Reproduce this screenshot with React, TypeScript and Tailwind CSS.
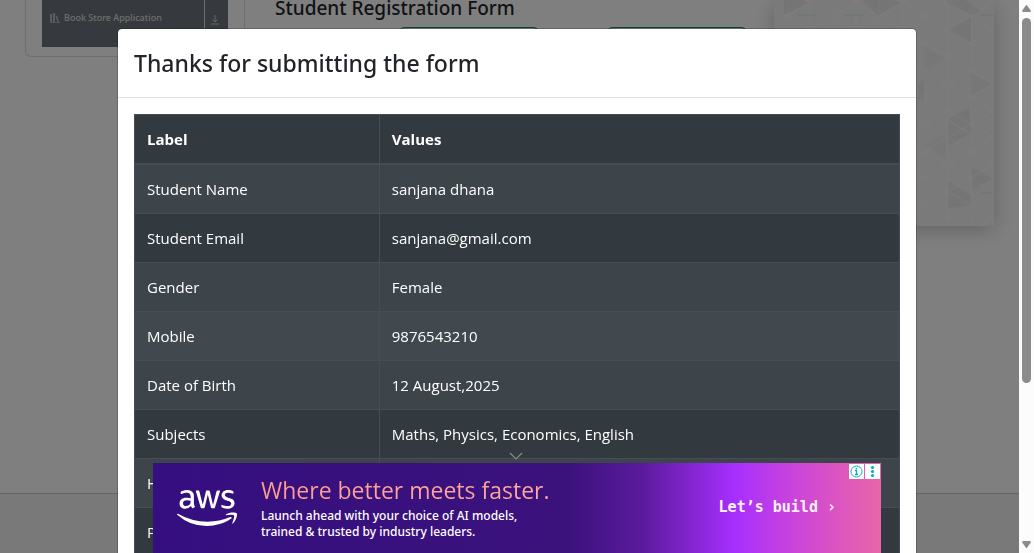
import React from 'react';
import { FaAws } from 'react-icons/fa';

const rows: [string, string][] = [
  ['Student Name', 'sanjana dhana'],
  ['Student Email', 'sanjana@gmail.com'],
  ['Gender', 'Female'],
  ['Mobile', '9876543210'],
  ['Date of Birth', '12 August,2025'],
  ['Subjects', 'Maths, Physics, Economics, English'],
  ['Hobbies', ''],
  ['Picture', ''],
];

function rowShade(index: number) {
  if (index === 3) return 'bg-[#42494e]';
  return index % 2 === 0 ? 'bg-[#3d444a]' : 'bg-[#32393f]';
}

function TriangleArt() {
  return (
    <svg className="block h-[226px] w-full" viewBox="0 0 220 226" preserveAspectRatio="none" aria-hidden="true">
      <defs>
        <pattern id="tri" width="46" height="27" patternUnits="userSpaceOnUse" x="13" y="16">
          <path
            d="M0 0V27M23 0V27M0 0L23 13.5L46 0M0 27L23 13.5L46 27"
            fill="none"
            stroke="#ffffff"
            strokeOpacity="0.45"
            strokeWidth="1.2"
          />
        </pattern>
      </defs>
      <rect width="220" height="226" fill="#f5f5f5" />
      <g fill="#eaeaea">
        <path d="M10 -12L34 3L10 15Z" />
        <path d="M80 -8L104 16L127 3L104 -8Z" />
        <path d="M172 -10L196 3L207 12L196 15L172 3Z" />
        <path d="M174 30L197 17V43Z" />
        <path d="M144 85L150 78V100H144Z" />
        <path d="M174 119L195 107L197 133L174 119Z" />
        <path d="M174 121L195 134L174 146Z" />
        <path d="M197 167L219 178L199 190Z" />
        <path d="M174 181L197 195V206L174 208Z" />
        <path d="M197 72L218 85L197 96Z" fillOpacity="0.6" />
        <path d="M150 46L172 60L150 72Z" fillOpacity="0.6" />
        <path d="M150 145L172 134V158Z" fillOpacity="0.5" />
      </g>
      <rect width="220" height="226" fill="url(#tri)" />
      <g stroke="#d0eaea" strokeWidth="1">
        <path d="M24 15H42M70 15H90M206 15H220M206 193H219" />
      </g>
    </svg>
  );
}

function BackgroundPage() {
  return (
    <div className="flex min-h-screen flex-col bg-white">
      <div className="flex items-start pr-10 pl-[25px]">
        <aside className="w-[220px] shrink-0 border-r border-[#dcdcdc]">
          <div className="rounded-b-md border border-t-0 border-r-0 border-[#dcdcdc] px-4 pb-[9px]">
            <div className="flex h-[47px] bg-[#6d757c] text-[#dddddd]">
              <a href="#books" className="flex flex-1 items-start gap-1 pt-3 pl-2 font-['Noto_Sans',sans-serif] text-[9px] leading-3 font-medium whitespace-nowrap">
                <svg width="10" height="10" viewBox="0 0 10 10" fill="#bbbbbb" className="mt-px" aria-hidden="true">
                  <path d="M0 1H2V9H0ZM3 0H5V9H3ZM5.5 3L7 2.5L9 9H7.500ZM0 9.200H10V10H0Z" />
                </svg>
                Book Store Application
              </a>
              <button aria-label="Expand" className="flex w-6 items-start justify-center border-l border-[#dddddd] pt-[15px] pr-1">
                <svg width="8" height="10" viewBox="0 0 8 10" fill="none" stroke="#cccccc" aria-hidden="true">
                  <path d="M4 0V7M1.500 4.500L4 7L6.500 4.500M0 9H8" />
                </svg>
              </button>
            </div>
          </div>
        </aside>
        <section className="min-w-0 flex-1 pl-[30px]">
          <h2 className="font-['Noto_Sans',sans-serif] text-[19px] leading-4 font-medium text-[#212529]">
            Student Registration Form
          </h2>
          <div className="mt-[11px] flex gap-[70px] pl-[125px]">
            <input aria-label="First Name" className="h-9 w-[138px] shrink-0 rounded border border-[#198754]" />
            <input aria-label="Last Name" className="h-9 w-[138px] shrink-0 rounded border border-[#198754]" />
          </div>
        </section>
        <aside className="w-[220px] shrink-0 shadow-[0_4px_20px_rgba(0,0,0,0.22)]">
          <TriangleArt />
        </aside>
      </div>
      <footer className="mt-auto h-[60px] border-t border-[#c8c8c8] bg-[#f2f2f2]" />
    </div>
  );
}

function SubmissionDialog() {
  return (
    <div
      role="dialog"
      aria-labelledby="dialog-title"
      className="mx-auto mt-7 w-full max-w-[800px] rounded-[5px] border border-black/20 bg-white bg-clip-padding"
    >
      <header className="border-b border-[#dee2e6] p-4">
        <h1 id="dialog-title" className="font-['Noto_Sans',sans-serif] text-[23px] leading-9 font-medium text-[#212529]">
          Thanks for submitting the form
        </h1>
      </header>
      <div className="p-4">
        <table className="w-full table-fixed border-collapse border border-[#454d55] text-left text-[15px] leading-6 text-white">
          <thead>
            <tr className="border-b-2 border-[#454d55] bg-[#32393f]">
              <th className="w-[32%] border-r border-[#454d55] p-3 font-bold">Label</th>
              <th className="p-3 font-bold">Values</th>
            </tr>
          </thead>
          <tbody>
            {rows.map(([label, value], i) => (
              <tr key={label} className={rowShade(i)}>
                <td className="border border-[#454d55] p-3">{label}</td>
                <td className="border border-[#454d55] p-3">{value}</td>
              </tr>
            ))}
          </tbody>
        </table>
      </div>
    </div>
  );
}

function AdBanner() {
  return (
    <div className="fixed inset-x-0 bottom-0 flex flex-col items-center">
      <button aria-label="Collapse" className="flex h-[14px] items-center pr-[3px]">
        <svg width="14" height="8" viewBox="0 0 14 8" fill="none" stroke="#8b8b8b" strokeWidth="1.2" aria-hidden="true">
          <path d="M1 1L7 7L13 1" />
        </svg>
      </button>
      <div className="relative flex h-[90px] w-[728px] items-center bg-[linear-gradient(90deg,#350f80_0%,#3b127c_57%,#5a1a9c_67%,#8425d0_74%,#a72fff_80%,#c23fe3_86%,#da51c4_93%,#e866aa_100%)] pr-[45px] pl-6">
        <FaAws className="h-12 w-[60px] shrink-0 text-white" aria-label="aws" />
        <div className="flex-1 pb-0.5 pl-6">
          <p className="bg-[linear-gradient(90deg,#ff9d8c,#ffb0b0)] bg-clip-text text-[23px] leading-8 text-transparent">Where better meets faster.</p>
          <p className="mt-0.5 font-['Noto_Sans',sans-serif] text-xs leading-4 font-medium text-white">
            Launch ahead with your choice of AI models,
            <br />
            trained &amp; trusted by industry leaders.
          </p>
        </div>
        <a href="#build" className="pb-0.5 font-['DejaVu_Sans_Mono',monospace] text-[15px] leading-6 font-bold whitespace-pre text-[#fff0ff]">
          Let’s build ›
        </a>
        <div className="absolute top-px right-px flex gap-px">
          <button aria-label="Ad information" className="flex size-[15px] items-center justify-center bg-white">
            <svg width="13" height="13" viewBox="0 0 13 13" fill="none" stroke="#00aecd" aria-hidden="true">
              <circle cx="6.500" cy="6.500" r="5.500" />
              <path d="M5 5.500H6.500V9.500M5 9.500H8M6.500 3V4.200" strokeWidth="1.300" />
            </svg>
          </button>
          <button aria-label="Ad options" className="flex size-[15px] items-center justify-center bg-white">
            <svg width="13" height="13" viewBox="0 0 13 13" fill="#00aecd" aria-hidden="true">
              <circle cx="6.500" cy="2.500" r="1.600" />
              <circle cx="6.500" cy="6.500" r="1.600" />
              <circle cx="6.500" cy="10.500" r="1.600" />
            </svg>
          </button>
        </div>
      </div>
    </div>
  );
}

function ScrollTrack() {
  return (
    <div className="fixed inset-y-0 right-0 flex w-[15px] flex-col items-center bg-[#fcfcfc]" aria-hidden="true">
      <svg className="mt-1 shrink-0" width="9" height="8" viewBox="0 0 9 8" fill="#8b8b8b">
        <path d="M3.800 1.500Q4.500 0.500 5.200 1.500L8.800 6.500Q9 8 8 8H1Q0 8 0.200 6.500Z" />
      </svg>
      <div className="mt-1.5 h-[66%] w-[9px] rounded-full bg-[#8b8b8b]" />
      <svg className="mt-auto mb-1 shrink-0" width="9" height="8" viewBox="0 0 9 8" fill="#8b8b8b">
        <path d="M3.800 6.500Q4.500 7.500 5.200 6.500L8.800 1.500Q9 0 8 0H1Q0 0 0.200 1.500Z" />
      </svg>
    </div>
  );
}

export default function App() {
  return (
    <div className="font-['Open_Sans','Noto_Sans',sans-serif]">
      <BackgroundPage />
      <div className="fixed inset-0 overflow-hidden bg-black/50">
        <SubmissionDialog />
      </div>
      <AdBanner />
      <ScrollTrack />
    </div>
  );
}
